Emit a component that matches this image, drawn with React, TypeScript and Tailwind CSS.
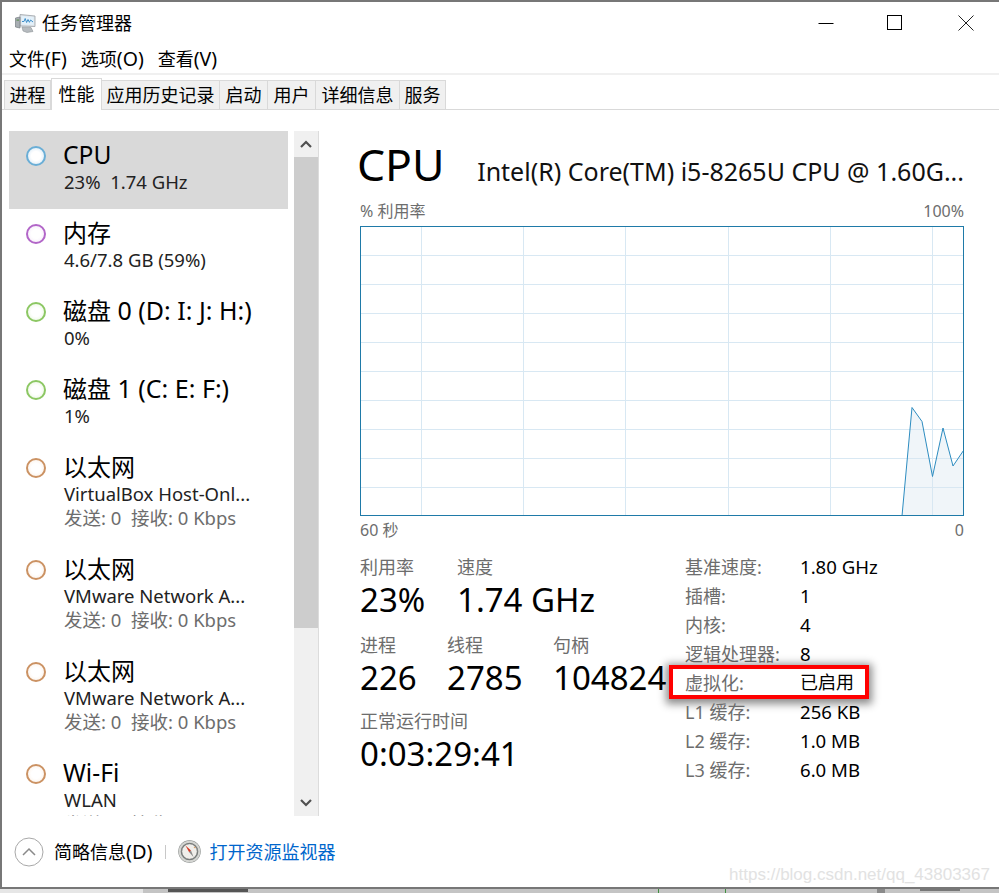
import React from "react";

const FONT = "[font-family:'Noto_Sans','Noto_Sans_CJK_SC',sans-serif]";

type Item = { pre?: string; name: string; l1: string; l2?: string; ring: string; tint: string; h: string };
const blue = { ring: "#6aaed6", tint: "#cfe4f4" };
const purple = { ring: "#b266c8", tint: "#f3e6f8" };
const green = { ring: "#8cc763", tint: "#e6f5da" };
const orange = { ring: "#cb9263", tint: "#fbeee2" };
const send = "发送: 0  接收: 0 Kbps";
const items: Item[] = [
  { name: "CPU", l1: "23%  1.74 GHz", ...blue, h: "h-[78px]" },
  { pre: "内存", name: "", l1: "4.6/7.8 GB (59%)", ...purple, h: "h-[78px]" },
  { pre: "磁盘", name: " 0 (D: I: J: H:)", l1: "0%", ...green, h: "h-[78px]" },
  { pre: "磁盘", name: " 1 (C: E: F:)", l1: "1%", ...green, h: "h-[78px]" },
  { pre: "以太网", name: "", l1: "VirtualBox Host-Onl...", l2: send, ...orange, h: "h-[102px]" },
  { pre: "以太网", name: "", l1: "VMware Network A...", l2: send, ...orange, h: "h-[102px]" },
  { pre: "以太网", name: "", l1: "VMware Network A...", l2: send, ...orange, h: "h-[102px]" },
  { name: "Wi-Fi", l1: "WLAN", l2: send, ...orange, h: "h-[102px]" },
];

const tabs: [string, string][] = [
  ["进程", "w-[47px]"],
  ["性能", "w-[51px]"],
  ["应用历史记录", "w-[118px]"],
  ["启动", "w-[48px]"],
  ["用户", "w-[48px]"],
  ["详细信息", "w-[84px]"],
  ["服务", "w-[46px]"],
];

const specs: [string, string][] = [
  ["基准速度:", "1.80 GHz"],
  ["插槽:", "1"],
  ["内核:", "4"],
  ["逻辑处理器:", "8"],
  ["虚拟化:", "已启用"],
  ["L1 缓存:", "256 KB"],
  ["L2 缓存:", "1.0 MB"],
  ["L3 缓存:", "6.0 MB"],
];

function Stat({ label, value, w }: { label: string; value: string; w: string }) {
  return (
    <div className={w}>
      <div className="text-[18px] leading-[24px] text-[#6d6d6d] whitespace-nowrap">{label}</div>
      <div className="text-[33px] leading-[42px] text-black whitespace-nowrap">{value}</div>
    </div>
  );
}

function AppIcon() {
  return (
    <svg width="21" height="20" viewBox="0 0 21 20" className="shrink-0">
      <path d="M5 1.5 L20 3 L20 13.5 L5 13 Z" fill="#dfe4e8" stroke="#9aa1a7" strokeWidth="0.8" />
      <path d="M6.5 3 L18.7 4 L18.7 12 L6.5 11.5 Z" fill="#e3f1fb" />
      <path d="M7 8.5 L9 8.5 L10.2 5.5 L11.6 9.5 L13 6.5 L14.4 9.3 L15.6 7 L18 9" fill="none" stroke="#3f8fc9" strokeWidth="1" />
      <path d="M0.5 5 L5 4 L5 15 L0.5 14 Z" fill="#a8aeb3" stroke="#767c81" strokeWidth="0.7" />
      <rect x="1.5" y="6.5" width="2.5" height="1.2" fill="#5f8f55" />
      <path d="M7 14 L16 14.5 L18 18.5 L12 19.5 L8 18 Z" fill="#b6bbbf" stroke="#8d9397" strokeWidth="0.6" />
    </svg>
  );
}

function Compass() {
  return (
    <svg width="23" height="23" viewBox="0 0 23 23" className="shrink-0">
      <circle cx="11.5" cy="11.5" r="11.2" fill="#7f8381" />
      <circle cx="11.5" cy="11.5" r="9.8" fill="none" stroke="#d4d5d2" strokeWidth="2" />
      <circle cx="11.5" cy="11.5" r="7.8" fill="#f0eeea" stroke="#66696a" strokeWidth="0.8" />
      <path d="M7.5 5.5 L13 10.6 L11.2 12.2 Z" fill="#d5341f" />
      <path d="M15.5 17 L11.2 12.2 L13 10.6 Z" fill="#8a8a8a" />
      <path d="M16 7 L17.5 8" stroke="#d8a06a" strokeWidth="1.2" />
    </svg>
  );
}

function Chart() {
  const hs = [29, 58, 87, 116, 145, 174, 203, 232, 261];
  const vs = [61, 163, 265, 368, 470, 572];
  const line = "M542 290 L552 181.5 L562 195.5 L572.5 250.5 L583 202 L593 240 L603.5 224.5";
  return (
    <svg viewBox="0 0 604 290" width="604" height="290" className="block">
      <rect width="604" height="290" fill="#fff" />
      {hs.map((y) => (
        <line key={y} x1="0" x2="604" y1={y + 0.5} y2={y + 0.5} stroke="#d8e8f3" />
      ))}
      {vs.map((x) => (
        <line key={x} y1="0" y2="290" x1={x + 0.5} x2={x + 0.5} stroke="#d8e8f3" />
      ))}
      <path d={`${line} L603.5 290 Z`} fill="#d9e7f1" fillOpacity="0.4" />
      <path d={line} fill="none" stroke="#2d8cc0" strokeWidth="1" />
      <rect x="0.5" y="0.5" width="603" height="289" fill="none" stroke="#1f7aa8" />
    </svg>
  );
}

function Menu({ cjk, key2 }: { cjk: string; key2: string }) {
  return (
    <span className="whitespace-nowrap">
      {cjk}
      <span className="text-[19.5px]">{key2}</span>
    </span>
  );
}

export default function App() {
  return (
    <div className={`${FONT} relative w-[999px] h-[893px] bg-white overflow-hidden text-black flex flex-col`}>
      <div className="h-[889px] border-t-2 border-l-2 border-b-2 border-[#777777] flex flex-col shrink-0">
        {/* Title bar */}
        <div className="h-[42px] flex items-center shrink-0 pl-[13px]">
          <AppIcon />
          <span className="ml-[6px] text-[18px] leading-[24px]">任务管理器</span>
          <div className="ml-auto flex items-center -mt-[1px]">
            <svg width="16" height="16" viewBox="0 0 16 16" className="mr-[53px]"><path d="M0.5 8.5 H15.5" stroke="#000" /></svg>
            <svg width="15" height="15" viewBox="0 0 15 15" className="mr-[56px]"><rect x="0.5" y="0.5" width="14" height="14" fill="none" stroke="#000" /></svg>
            <svg width="16" height="16" viewBox="0 0 16 16" className="mr-[25px]"><path d="M0.5 0.5 L15.5 15.5 M15.5 0.5 L0.5 15.5" stroke="#222" /></svg>
          </div>
        </div>
        {/* Menu */}
        <div className="h-[29px] flex items-center shrink-0 pl-[7px] gap-[14px] text-[18px] leading-[24px]">
          <Menu cjk="文件" key2="(F)" />
          <Menu cjk="选项" key2="(O)" />
          <Menu cjk="查看" key2="(V)" />
        </div>
        <div className="h-[2px] bg-[#f0f0f0] shrink-0" />
        {/* Tabs */}
        <div className="h-[35px] flex items-end shrink-0 pl-[2px] border-b border-[#d9d9d9]">
          {tabs.map(([t, w], i) =>
            i === 1 ? (
              <div key={t} className={`${w} h-[32px] -mb-px bg-white border border-b-0 border-[#d9d9d9] flex items-center justify-center text-[18px] leading-[24px] pb-[2px]`}>
                {t}
              </div>
            ) : (
              <div key={t} className={`${w} h-[29px] bg-[#f0f0f0] border border-b-0 border-l-0 first:border-l border-[#d9d9d9] flex items-center justify-center text-[18px] leading-[24px]`}>
                {t}
              </div>
            )
          )}
        </div>
        {/* Body */}
        <div className="flex-1 flex min-h-0 pt-[21px]">
          {/* Sidebar */}
          <div className="w-[279px] ml-[7px] h-[685px] overflow-hidden shrink-0">
            {items.map((it, i) => (
              <div key={i} className={`${it.h} flex pl-[17px] pt-[9px] ${i === 0 ? "bg-[#d9d9d9]" : ""}`}>
                <span
                  className="w-[20px] h-[20px] rounded-full border-2 mt-[6px] shrink-0"
                  style={{ background: `radial-gradient(circle, #ffffff 40%, ${it.tint} 100%)`, borderColor: it.ring }}
                />
                <div className="ml-[17px] whitespace-pre">
                  {it.pre ? (
                    <div className="h-[30px] text-[24px] leading-[28px]">
                      {it.pre}
                      <span className="text-[25px] leading-[28px]">{it.name}</span>
                    </div>
                  ) : (
                    <div className="h-[30px] text-[24.6px] leading-[30px]">{it.name}</div>
                  )}
                  <div className="ml-[1px] text-[18.5px] leading-[24px] text-[#222]">{it.l1}</div>
                  {it.l2 && <div className="ml-[1px] text-[18.5px] leading-[24px] text-[#6d6d6d]">{it.l2}</div>}
                </div>
              </div>
            ))}
          </div>
          {/* Scrollbar */}
          <div className="ml-[6px] w-[25px] h-[685px] bg-[#f0f0f0] flex flex-col shrink-0 border-r border-[#dcdcdc]">
            <div className="h-[26px] flex items-center justify-center shrink-0">
              <svg width="14" height="10" viewBox="0 0 14 10"><path d="M2 8 L7 3 L12 8" fill="none" stroke="#505050" strokeWidth="2.2" /></svg>
            </div>
            <div className="h-[471px] bg-[#cdcdcd] shrink-0" />
            <div className="mt-auto h-[26px] flex items-center justify-center shrink-0">
              <svg width="14" height="10" viewBox="0 0 14 10"><path d="M2 2 L7 7 L12 2" fill="none" stroke="#505050" strokeWidth="2.2" /></svg>
            </div>
          </div>
          {/* Main */}
          <div className="ml-[41px] w-[604px] shrink-0">
            <div className="flex items-baseline justify-between h-[63px] mt-[2px]">
              <span className="text-[44.5px] leading-[61px] -ml-[3px]">CPU</span>
              <span className="text-[25px] leading-[32px] text-[#111] whitespace-nowrap">Intel(R) Core(TM) i5-8265U CPU @ 1.60G...</span>
            </div>
            <div className="flex justify-between text-[16px] leading-[22px] text-[#6d6d6d] mt-[4px] mb-[4px]">
              <span>% 利用率</span>
              <span>100%</span>
            </div>
            <Chart />
            <div className="flex justify-between text-[16px] leading-[22px] text-[#6d6d6d] mt-[3px]">
              <span>60 秒</span>
              <span>0</span>
            </div>
            <div className="flex mt-[14px]">
              <div className="w-[325px] shrink-0">
                <div className="flex">
                  <Stat w="w-[97px]" label="利用率" value="23%" />
                  <Stat w="w-[200px]" label="速度" value="1.74 GHz" />
                </div>
                <div className="flex mt-[12px]">
                  <Stat w="w-[87px]" label="进程" value="226" />
                  <Stat w="w-[106px]" label="线程" value="2785" />
                  <Stat w="w-[120px]" label="句柄" value="104824" />
                </div>
                <div className="mt-[10px]">
                  <Stat w="w-[200px]" label="正常运行时间" value="0:03:29:41" />
                </div>
              </div>
              <div className="relative text-[18px] leading-[29px] -mt-[3px]">
                {specs.map(([k, v], i) => (
                  <div key={k} className="flex h-[29px] relative">
                    <span className="w-[115px] pt-[1px] text-[#6d6d6d] whitespace-nowrap">{k}</span>
                    <span className={`text-black whitespace-nowrap ${i === 4 ? "text-[18px]" : "text-[18.6px]"}`}>{v}</span>
                    {i === 4 && (
                      <div className="absolute left-[-16px] top-[-3px] w-[200px] h-[34px] border-[4px] border-[#ff0000] shadow-[0_2px_8px_3px_rgba(0,0,0,0.45)]" />
                    )}
                  </div>
                ))}
              </div>
            </div>
          </div>
        </div>
        {/* Footer */}
        <div className="h-[71px] flex items-center shrink-0 pl-[12px]">
          <svg width="30" height="30" viewBox="0 0 30 30" className="shrink-0">
            <circle cx="15" cy="15" r="14" fill="#fff" stroke="#a8a8a8" />
            <path d="M9 18 L15 12 L21 18" fill="none" stroke="#8a8a8a" strokeWidth="1.5" />
          </svg>
          <span className="ml-[10px] pt-[1px] text-[18px] leading-[24px] whitespace-nowrap">简略信息<span className="text-[20px]">(D)</span></span>
          <span className="ml-[12px] w-px h-[14px] bg-[#c8c8c8]" />
          <span className="ml-[12px]"><Compass /></span>
          <span className="ml-[9px] pt-[1px] text-[18px] leading-[24px] text-[#0066cc]">打开资源监视器</span>
        </div>
      </div>
      {/* What shows below the window */}
      <div className="relative flex-1 flex">
        <div className="w-[143px] bg-[#e6e6e6]" />
        <div className="flex-1 bg-[#c4c4c4] relative">
          <div className="absolute left-[25px] top-0 w-[80px] h-[3px] bg-[#555555]" />
          <div className="absolute left-[515px] top-0 w-px h-[4px] bg-[#3f8f3f]" />
          <div className="absolute left-[582px] top-0 w-px h-[4px] bg-[#3f8f3f]" />
          <div className="absolute left-[734px] top-0 w-[8px] h-[4px] bg-[#8a8a8a]" />
          <div className="absolute left-[777px] top-0 w-[40px] h-[2px] bg-[#777777]" />
        </div>
      </div>
      <div className="absolute right-[9px] top-[863px] text-[17px] leading-[24px] text-[#e2e2e2] [font-family:'Liberation_Sans',sans-serif]">https://blog.csdn.net/qq_43803367</div>
    </div>
  );
}
